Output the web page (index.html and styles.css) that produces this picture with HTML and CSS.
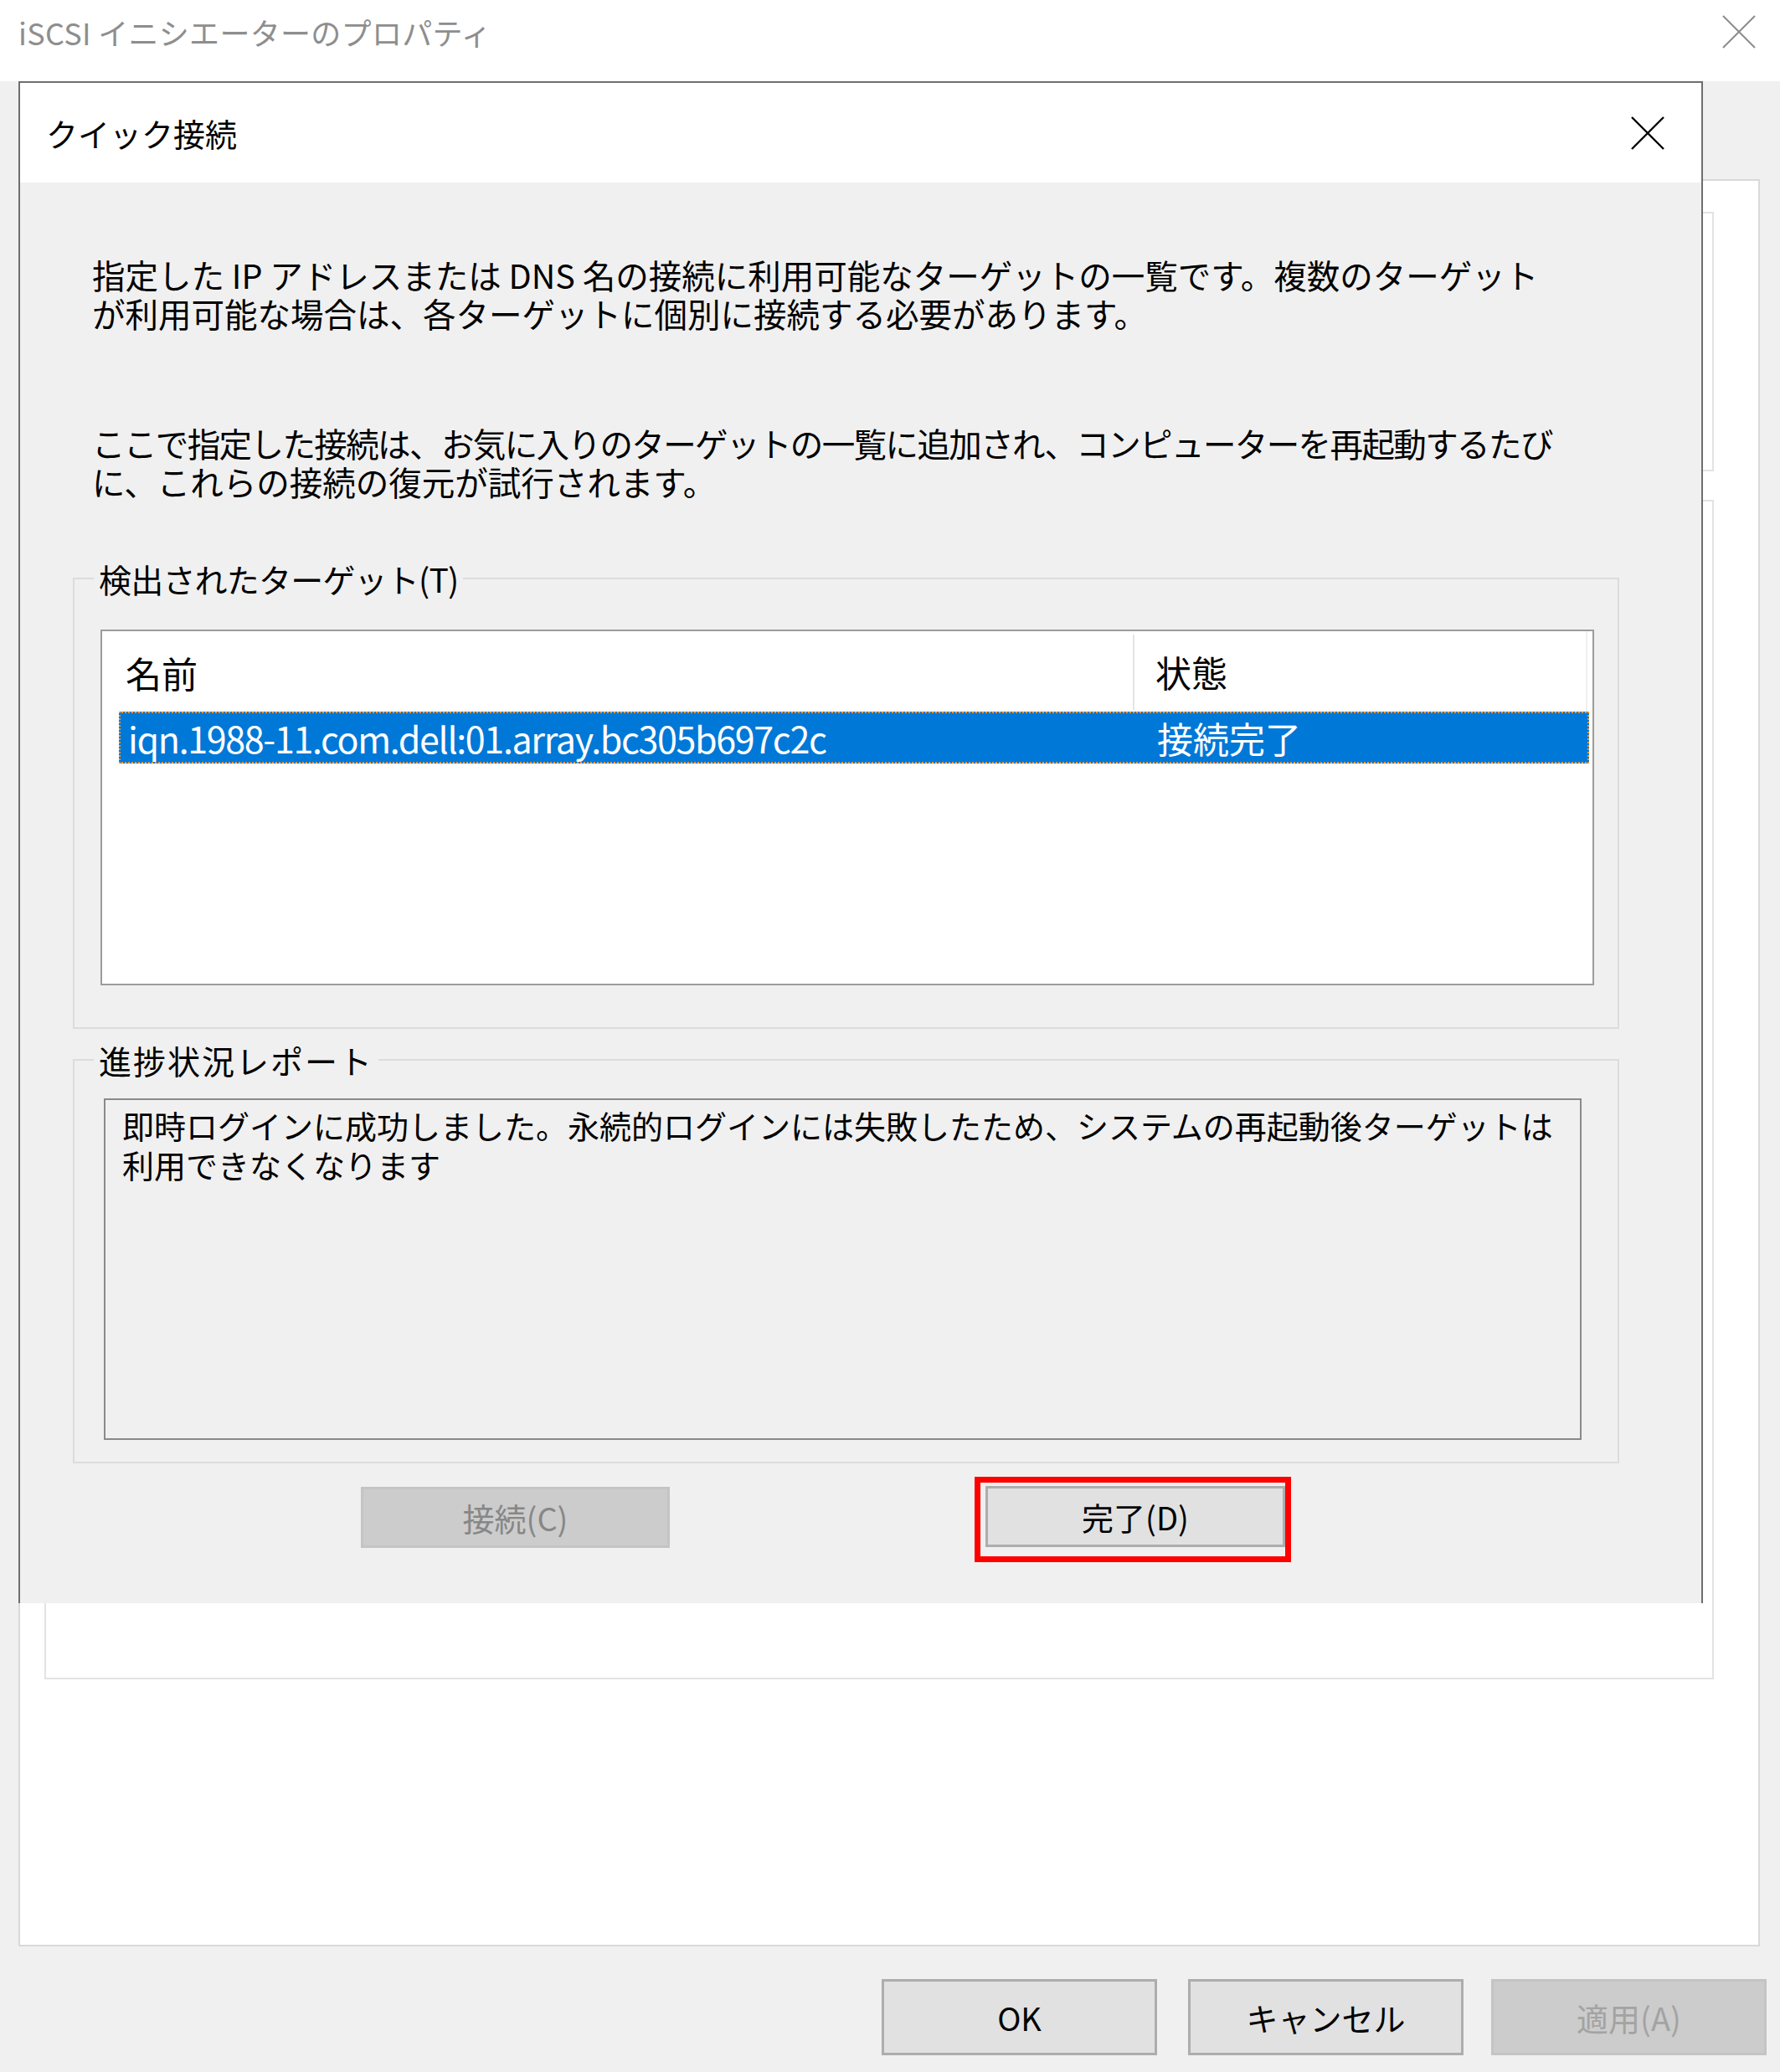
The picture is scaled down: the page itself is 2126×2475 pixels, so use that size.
FILE: index.html
```html
<!DOCTYPE html>
<html lang="ja">
<head>
<meta charset="utf-8">
<title>iSCSI イニシエーターのプロパティ</title>
<link rel="stylesheet" href="styles.css">
</head>
<body>
<div class="window">
  <div class="titlebar">
    <span class="win-title">iSCSI イニシエーターのプロパティ</span>
    <svg class="win-close" width="40" height="40" viewBox="0 0 40 40"><path d="M1 1L39 39M39 1L1 39" stroke="#8c8c8c" stroke-width="2" fill="none"/></svg>
  </div>
  <div class="win-body">
    <div class="tabpage">
      <div class="pane pane-a"></div>
      <div class="pane pane-b"></div>
    </div>
    <div class="win-buttons">
      <button class="btn btn-ok">OK</button>
      <button class="btn btn-cancel">キャンセル</button>
      <button class="btn btn-disabled btn-apply">適用(A)</button>
    </div>
  </div>

  <div class="dialog">
    <div class="dlg-title">
      <span class="dlg-caption">クイック接続</span>
      <svg class="dlg-close" width="40" height="40" viewBox="0 0 40 40"><path d="M1 1L39 39M39 1L1 39" stroke="#000" stroke-width="2.4" fill="none"/></svg>
    </div>
    <div class="dlg-body">
      <p class="para para-1">指定した IP アドレスまたは DNS 名の接続に利用可能なターゲットの一覧です。複数のターゲット<br>が利用可能な場合は、各ターゲットに個別に接続する必要があります。</p>
      <p class="para para-2"><span class="tight">ここで指定した接続は、お気に入りのターゲットの一覧に追加され、コンピューターを再起動するたび</span><br>に、これらの接続の復元が試行されます。</p>

      <fieldset class="group group-targets">
        <legend>検出されたターゲット(T)</legend>
        <div class="listview">
          <div class="lv-header">
            <div class="lv-col lv-col-name">名前</div>
            <div class="lv-col lv-col-state">状態</div>
          </div>
          <div class="lv-row selected">
            <div class="lv-cell lv-cell-name">iqn.1988-11.com.dell:01.array.bc305b697c2c</div>
            <div class="lv-cell lv-cell-state">接続完了</div>
          </div>
        </div>
      </fieldset>

      <fieldset class="group group-report">
        <legend>進捗状況レポート</legend>
        <div class="report">即時ログインに成功しました。永続的ログインには失敗したため、システムの再起動後ターゲットは<br>利用できなくなります</div>
      </fieldset>

      <div class="dlg-buttons">
        <button class="btn btn-disabled btn-connect">接続(C)</button>
        <div class="highlight">
          <button class="btn btn-done">完了(D)</button>
        </div>
      </div>
    </div>
  </div>
</div>
</body>
</html>
```

FILE: styles.css
```css
* { box-sizing: border-box; }

html, body {
  margin: 0;
  padding: 0;
  background: #f0f0f0;
}

body {
  font-family: "Noto Sans CJK JP", "Noto Sans", sans-serif;
  color: #000;
}

.window {
  position: relative;
  width: 2126px;
  height: 2475px;
  background: #f0f0f0;
  overflow: hidden;
}

/* outer title bar */
.titlebar {
  height: 97px;
  background: #fff;
  display: flex;
  align-items: center;
  justify-content: space-between;
  padding: 0 29px 21px 22px;
}

.win-title {
  font-size: 36px;
  line-height: 46px;
  color: #8e8e8e;
  letter-spacing: 0.3px;
}

.win-close { display: block; }

/* outer body */
.win-body {
  padding: 117px 24px 0 22px;
}

.tabpage {
  height: 2111px;
  background: #fff;
  border: 2px solid #d9d9d9;
  padding: 37px 53px 0 29px;
  display: flex;
  flex-direction: column;
  gap: 34px;
}

.pane {
  background: #fff;
  border: 2px solid #e3e3e3;
}

.pane-a { height: 310px; }
.pane-b { height: 1409px; }

.win-buttons {
  margin-top: 39px;
  margin-right: -8px;
  display: flex;
  justify-content: flex-end;
}

.btn {
  font-family: "Noto Sans CJK JP", "Noto Sans", sans-serif;
  font-size: 38px;
  color: #000;
  background: #e1e1e1;
  border: 3px solid #adadad;
  padding: 0;
  margin: 0;
  display: flex;
  align-items: center;
  justify-content: center;
  line-height: 1;
}

.btn-disabled {
  background: #cccccc;
  border-color: #c4c4c4;
  color: #8d8d8d;
}

.win-buttons .btn {
  height: 91px;
  width: 329px;
}

.btn-cancel { margin-left: 37px; }
.btn-apply { margin-left: 33px; color: #a3a3a3; }

/* dialog window */
.dialog {
  position: absolute;
  left: 22px;
  top: 97px;
  width: 2012px;
  height: 1818px;
  background: #f0f0f0;
  border: 2px solid #6e6e6e;
  border-bottom: none;
}

.dlg-title {
  height: 119px;
  background: #fff;
  display: flex;
  align-items: center;
  justify-content: space-between;
  padding: 0 44px 0 31px;
}

.dlg-caption {
  font-size: 38px;
  line-height: 46px;
}

.dlg-close { display: block; }

.dlg-body {
  padding: 0 98px 0 63px;
}

.para {
  margin: 0 0 0 23px;
  font-size: 39.5px;
  line-height: 46px;
  white-space: nowrap;
}

.para-1 { padding-top: 87px; }
.para-2 { margin-top: 109px; }

.tight { letter-spacing: -1.6px; }

/* group boxes */
.group {
  margin: 0;
  padding: 0;
  border: 2px solid #dcdcdc;
  min-width: 0;
}

.group legend {
  font-size: 39px;
  line-height: 46px;
  padding: 0 6px;
  margin-left: 23px;
  letter-spacing: -0.8px;
}

.group-targets { margin-top: 70px; }
.group-report { margin-top: 14px; }

.group-report legend { letter-spacing: 2px; }

/* list view */
.listview {
  margin: 38px 28px 50px 31px;
  height: 425px;
  background: #fff;
  border: 2px solid #9c9c9c;
  font-size: 43px;
}

.lv-header {
  display: flex;
  height: 96px;
  margin-right: 6px;
  border-right: 2px solid #f0f0f0;
}

.lv-col {
  display: flex;
  align-items: center;
  line-height: 1;
}

.lv-col-name {
  width: 1233px;
  padding-left: 28px;
  border-right: 2px solid #e5e5e5;
  margin: 4px 0 2px;
}

.lv-col-state {
  padding-left: 25px;
  flex: 1;
}

.lv-row {
  display: flex;
  align-items: center;
  height: 62px;
  margin: 0 4px 0 20px;
}

.lv-row.selected {
  background: #0078d7;
  color: #fff;
  outline: 2px dotted #e89a3c;
  outline-offset: -2px;
}

.lv-cell { line-height: 1; white-space: nowrap; }

.lv-cell-name {
  width: 1240px;
  padding-left: 11px;
  letter-spacing: -1.35px;
}

/* progress report */
.report {
  margin: 23px 43px 26px 35px;
  height: 408px;
  background: #f0f0f0;
  border: 2px solid #8a8a8a;
  padding: 6px 0 0 20px;
  font-size: 38px;
  line-height: 47px;
  white-space: nowrap;
}

/* dialog buttons */
.dlg-buttons {
  margin-top: 16px;
  display: flex;
  align-items: flex-start;
}

.btn-connect {
  width: 369px;
  height: 73px;
  margin: 12px 0 0 344px;
  color: #878787;
}

.highlight {
  margin-left: 364px;
  border: 7px solid #ff0000;
  padding: 4px 0 11px 6px;
}

.btn-done {
  width: 358px;
  height: 73px;
}
```
